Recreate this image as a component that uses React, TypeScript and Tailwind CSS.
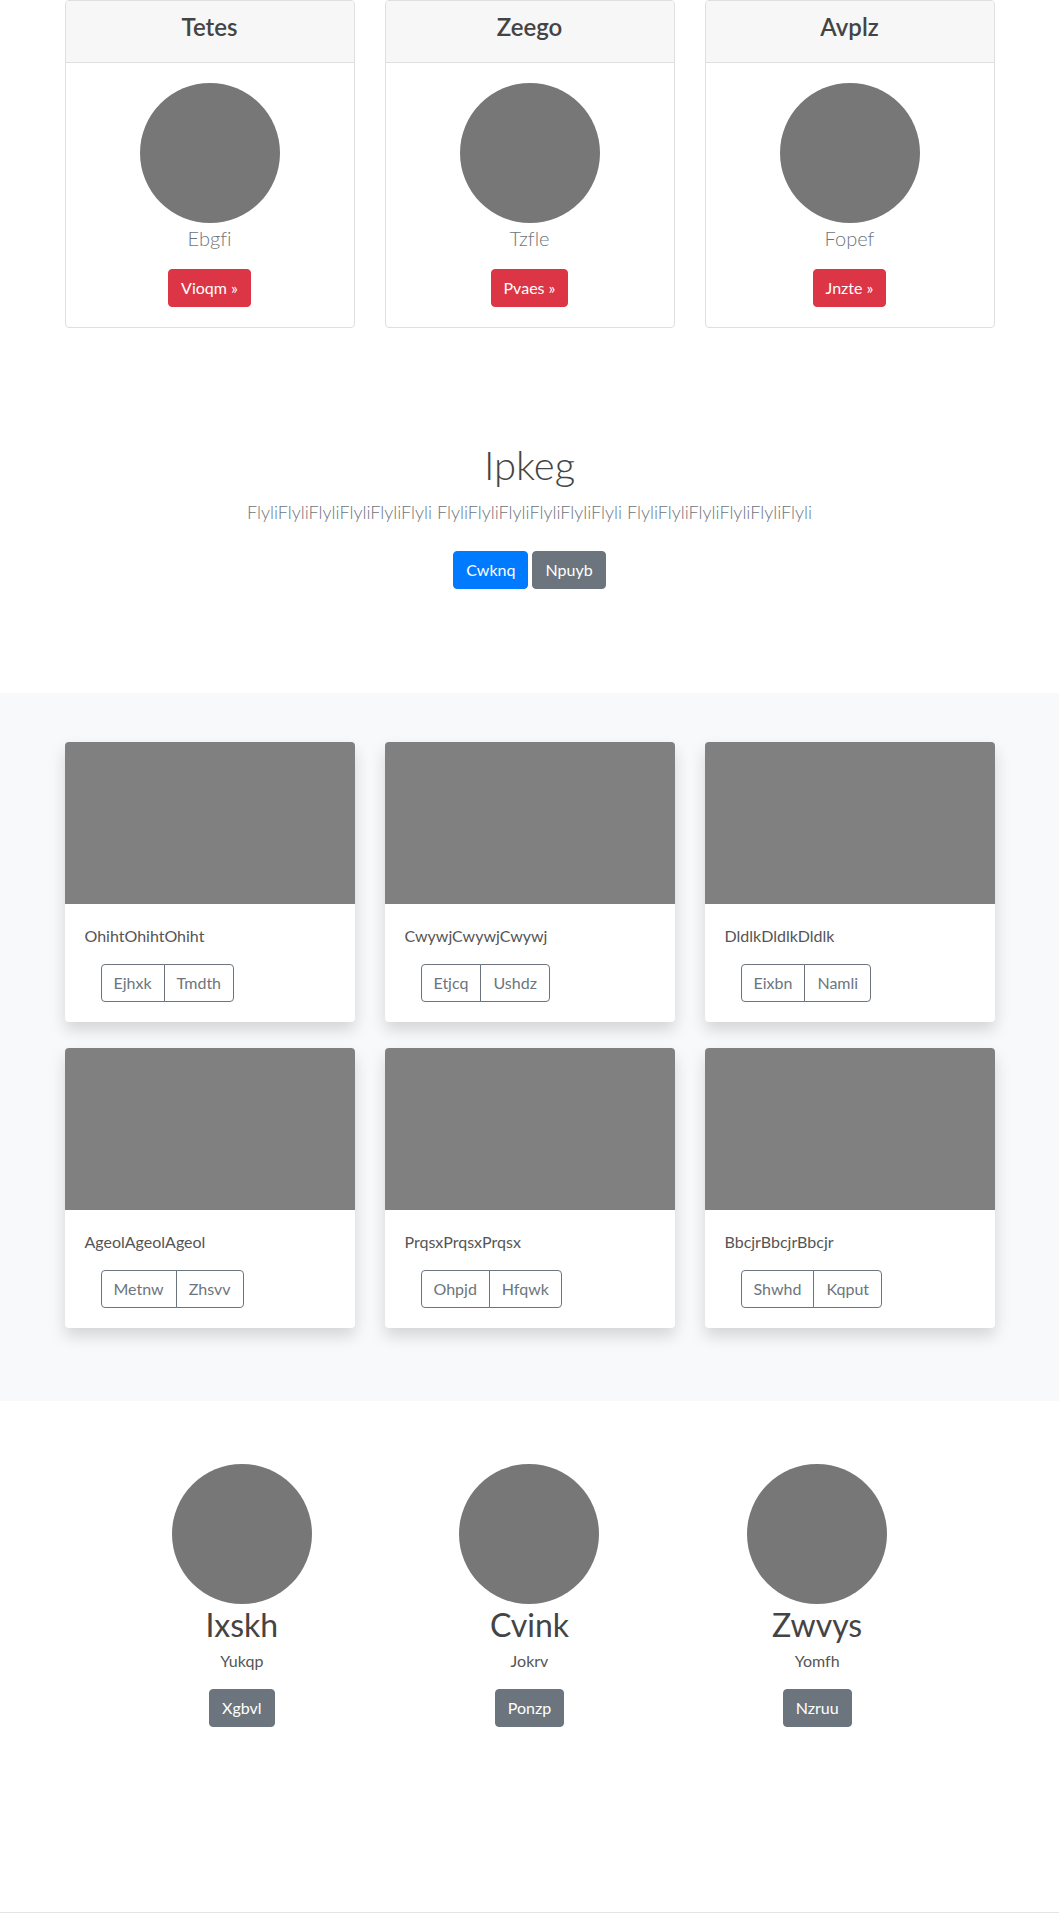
import React from 'react';

const pricing = [
  { title: 'Tetes', sub: 'Ebgfi', cta: 'Vioqm »' },
  { title: 'Zeego', sub: 'Tzfle', cta: 'Pvaes »' },
  { title: 'Avplz', sub: 'Fopef', cta: 'Jnzte »' },
];

const album = [
  { text: 'OhihtOhihtOhiht', a: 'Ejhxk', b: 'Tmdth' },
  { text: 'CwywjCwywjCwywj', a: 'Etjcq', b: 'Ushdz' },
  { text: 'DldlkDldlkDldlk', a: 'Eixbn', b: 'Namli' },
  { text: 'AgeolAgeolAgeol', a: 'Metnw', b: 'Zhsvv' },
  { text: 'PrqsxPrqsxPrqsx', a: 'Ohpjd', b: 'Hfqwk' },
  { text: 'BbcjrBbcjrBbcjr', a: 'Shwhd', b: 'Kqput' },
];

const team = [
  { name: 'Ixskh', role: 'Yukqp', cta: 'Xgbvl' },
  { name: 'Cvink', role: 'Jokrv', cta: 'Ponzp' },
  { name: 'Zwvys', role: 'Yomfh', cta: 'Nzruu' },
];

export default function App() {
  return (
    <div className="min-h-screen bg-white font-['Lato','Open_Sans',sans-serif] [font-variant-ligatures:none] text-[16px] leading-6 text-[#555]">
      {/* Pricing cards */}
      <div className="w-[960px] mx-auto px-[15px]">
        <div className="grid grid-cols-3 gap-[30px]">
          {pricing.map((p) => (
            <div key={p.title} className="border border-[#dfdfdf] rounded-[4px] bg-white overflow-hidden">
              <div className="bg-[#f7f7f7] border-b border-[#dfdfdf] px-5 pt-3 pb-3">
                <h4 className="text-[24px] leading-[1.2] mb-2 font-semibold text-center text-[#444]">{p.title}</h4>
              </div>
              <div className="p-5 text-center">
                <div className="mx-auto w-[140px] h-[140px] rounded-full bg-[#777]" />
                <p className="text-[20px] font-light leading-[30px] text-[#6c757d] mb-4">{p.sub}</p>
                <button className="inline-flex px-3 py-[6px] text-[16px] leading-6 rounded-[4px] border border-[#dc3545] bg-[#dc3545] text-white">
                  {p.cta}
                </button>
              </div>
            </div>
          ))}
        </div>
      </div>

      {/* Hero */}
      <section className="mt-[113px] pb-[96px] text-center">
        <h1 className="text-[40px] leading-[48px] font-light text-[#444] mb-2">Ipkeg</h1>
        <p className="text-[18px] leading-[30px] font-light text-[#6c757d] mb-4">
          FlyliFlyliFlyliFlyliFlyliFlyli FlyliFlyliFlyliFlyliFlyliFlyli FlyliFlyliFlyliFlyliFlyliFlyli
        </p>
        <div className="flex justify-center gap-[4px] py-2">
          <button className="px-3 py-[6px] text-[16px] leading-6 rounded-[4px] border border-[#007bff] bg-[#007bff] text-white">Cwknq</button>
          <button className="px-3 py-[6px] text-[16px] leading-6 rounded-[4px] border border-[#6c757d] bg-[#6c757d] text-white">Npuyb</button>
        </div>
      </section>

      {/* Album */}
      <div className="bg-[#f8f9fa] pt-[49px] pb-[73px]">
        <div className="w-[960px] mx-auto px-[15px]">
          <div className="grid grid-cols-3 gap-x-[30px] gap-y-[26px]">
            {album.map((c) => (
              <div key={c.text} className="bg-white rounded-[4px] overflow-hidden shadow-[0_8px_16px_rgba(0,0,0,0.15)]">
                <div className="h-[162px] bg-[#808080]" />
                <div className="p-5">
                  <p className="mb-4 text-[#555]">{c.text}</p>
                  <div className="pl-[16px] flex">
                    <button className="px-3 py-[6px] text-[16px] leading-6 border border-[#6c757d] text-[#6c757d] rounded-l-[4px]">{c.a}</button>
                    <button className="-ml-px px-3 py-[6px] text-[16px] leading-6 border border-[#6c757d] text-[#6c757d] rounded-r-[4px]">{c.b}</button>
                  </div>
                </div>
              </div>
            ))}
          </div>
        </div>
      </div>

      {/* Team */}
      <section className="pt-[63px] pb-[185px]">
        <div className="w-[863px] mx-auto grid grid-cols-3">
          {team.map((t) => (
            <div key={t.name} className="text-center">
              <div className="mx-auto w-[140px] h-[140px] rounded-full bg-[#777]" />
              <h2 className="text-[32px] leading-[1.2] font-normal text-[#444] mt-[2px] mb-[5px]">{t.name}</h2>
              <p className="mb-4 text-[#555]">{t.role}</p>
              <button className="px-3 py-[6px] text-[16px] leading-6 rounded-[4px] border border-[#6c757d] bg-[#6c757d] text-white">{t.cta}</button>
            </div>
          ))}
        </div>
      </section>

      <footer className="border-t border-[#e5e5e5] h-[40px]" />
    </div>
  );
}
